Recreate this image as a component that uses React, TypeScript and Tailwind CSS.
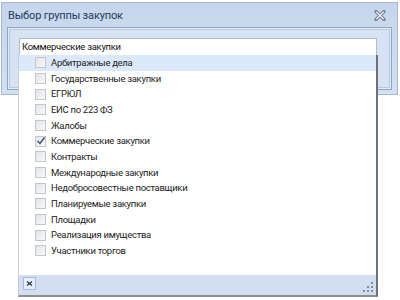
import React from "react";

const items = [
  "Арбитражные дела",
  "Государственные закупки",
  "ЕГРЮЛ",
  "ЕИС по 223 ФЗ",
  "Жалобы",
  "Коммерческие закупки",
  "Контракты",
  "Международные закупки",
  "Недобросовестные поставщики",
  "Планируемые закупки",
  "Площадки",
  "Реализация имущества",
  "Участники торгов",
];

function Check({ checked }: { checked: boolean }) {
  return (
    <div className="w-[11px] h-[11px] border border-[#c3c7cc] bg-gradient-to-br from-[#e2e4e8] to-[#f8f9fa] relative shrink-0">
      {checked && (
        <svg width="10" height="10" viewBox="0 0 10 10" className="absolute left-[0px] top-[-1px]">
          <path d="M1.5 5 L4 7.5 L8.5 1.5" stroke="#3a4f6e" strokeWidth="1.4" fill="none" />
        </svg>
      )}
    </div>
  );
}

export default function App() {
  return (
    <div className="w-[400px] h-[300px] bg-white relative overflow-hidden font-['Roboto','DejaVu_Sans',sans-serif] text-[9.5px] tracking-[-0.3px]">
      <div className="ml-[1px] mt-[2px] w-[397px] h-[93px] border border-[#a6b9d4] bg-gradient-to-b from-[#c5d6ec] to-[#d3e0f1] flex flex-col">
        <div className="h-[24px] flex items-center justify-between pl-[6px] pr-[11px]">
          <span className="text-[#1f3a5f] text-[11px] tracking-[-0.15px] leading-none">Выбор группы закупок</span>
          <svg width="12" height="11" viewBox="0 0 12 11">
            <path d="M2 1.5 L10 9.5 M10 1.5 L2 9.5" stroke="#7a8596" strokeWidth="3.4" strokeLinecap="round" />
            <path d="M2.3 1.8 L9.7 9.2 M9.7 1.8 L2.3 9.2" stroke="#ffffff" strokeWidth="1.1" />
          </svg>
        </div>
        <div className="mx-[5px] h-[63px] border border-[#8ea4c4] p-[1px] bg-[#e3ebf6]">
          <div className="h-full border border-[#b8c9e0] bg-[#d7e3f3] pt-[8px] pl-[9px]">
            <div className="w-[358px] h-[18px] bg-white border border-[#b1bdcc] flex items-center pl-[2px] text-[#111]">
              Коммерческие закупки
            </div>
          </div>
        </div>
      </div>

      <div className="absolute left-[18px] top-[55px] w-[360px] h-[242px] bg-white border-l border-[#c9ced6] border-r-2 border-r-[#6d7278] border-b-2 border-b-[#8a8f96] flex flex-col">
        <div className="flex-1 flex flex-col">
          {items.map((t, i) => (
            <div
              key={t}
              className={
                "h-[15.67px] flex items-center gap-[5px] pl-[16px] text-[#1c1c1c] " +
                (i === 0 ? "bg-[#dce9fb]" : "")
              }
            >
              <Check checked={t === "Коммерческие закупки"} />
              <span className="leading-none">{t}</span>
            </div>
          ))}
        </div>
        <div className="h-[20px] bg-[#d3dff0] flex items-start justify-between pl-[4px] pr-[2px] pt-[2px]">
          <div className="w-[13px] h-[13px] border border-[#a8b9d3] bg-[#e6eef8] flex items-center justify-center">
            <svg width="7" height="5" viewBox="0 0 7 5">
              <path d="M1 0.5 L6 4.5 M6 0.5 L1 4.5" stroke="#2a3442" strokeWidth="1.3" />
            </svg>
          </div>
          <svg width="12" height="12" viewBox="0 0 12 12" className="mt-[5px]">
            <rect x="9" y="0" width="2" height="2" fill="#7f8ea3" />
            <rect x="9" y="4" width="2" height="2" fill="#7f8ea3" />
            <rect x="5" y="4" width="2" height="2" fill="#7f8ea3" />
            <rect x="9" y="8" width="2" height="2" fill="#7f8ea3" />
            <rect x="5" y="8" width="2" height="2" fill="#7f8ea3" />
            <rect x="1" y="8" width="2" height="2" fill="#7f8ea3" />
          </svg>
        </div>
      </div>
    </div>
  );
}
